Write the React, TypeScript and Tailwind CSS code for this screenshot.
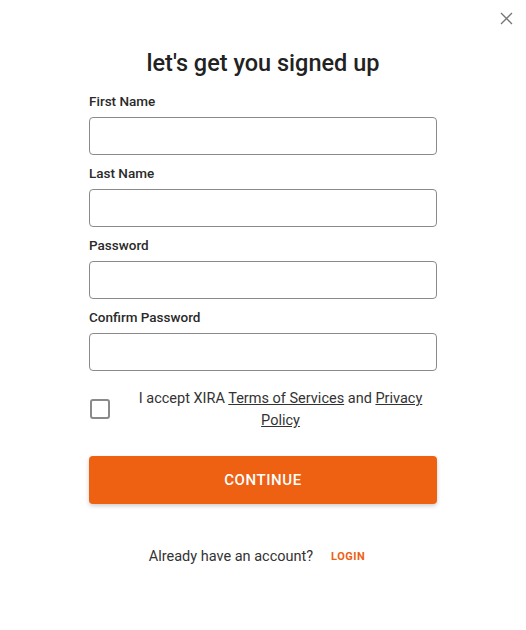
import { useState } from "react";

const fields = ["First Name", "Last Name", "Password", "Confirm Password"];

export default function App() {
  const [accepted, setAccepted] = useState(false);

  return (
    <div className="relative min-h-[630px] w-[526px] bg-white font-['Roboto',sans-serif] text-[#222]">
      {/* CLOSE */}
      <button className="absolute right-[13px] top-[12px] text-[#757575]">
        <svg width="13" height="13" viewBox="0 0 13 13" fill="none" stroke="currentColor" strokeWidth="1.3">
          <path d="M1 1L12 12M12 1L1 12" />
        </svg>
      </button>

      <div className="mx-auto w-[348px] pt-[48px]">
        {/* HEADER */}
        <h2 className="text-center text-[23.5px] font-medium leading-[30px]">
          let's get you signed up
        </h2>

        {/* FIELDS */}
        <div className="mt-[15px] flex flex-col gap-[10px]">
          {fields.map((f) => (
            <div key={f}>
              <label className="block text-[13.5px] font-medium leading-[16px] text-[#2a2a2a]">{f}</label>
              <input
                type={f.includes("Password") ? "password" : "text"}
                className="mt-[8px] block h-[38px] w-full rounded-[4px] border border-[#8a8a8a] px-3 outline-none"
              />
            </div>
          ))}
        </div>

        {/* TERMS */}
        <div className="mt-[17px] flex items-start">
          <button
            onClick={() => setAccepted(!accepted)}
            className="mt-[11px] ml-[1px] h-[20px] w-[20px] shrink-0 rounded-[3px] border-2 border-[#8a8a8a]"
          />
          <p className="flex-1 pl-[14px] text-center text-[14.5px] leading-[22px] text-[#333]">
            I accept XIRA <span className="underline">Terms of Services</span> and{" "}
            <span className="underline">Privacy Policy</span>
          </p>
        </div>

        {/* CONTINUE */}
        <button className="mt-[24px] h-[48px] w-full rounded-[4px] bg-[#ee6012] text-[15px] font-medium tracking-[0.6px] text-white shadow-[0_2px_4px_rgba(0,0,0,0.2)]">
          CONTINUE
        </button>

        {/* LOGIN */}
        <div className="mt-[43px] flex items-center justify-center gap-[18px] pr-[12px] leading-[20px]">
          <span className="text-[14.5px] text-[#333]">Already have an account?</span>
          <span className="text-[11px] font-bold tracking-[0.5px] text-[#ee6012]">LOGIN</span>
        </div>
      </div>
    </div>
  );
}
